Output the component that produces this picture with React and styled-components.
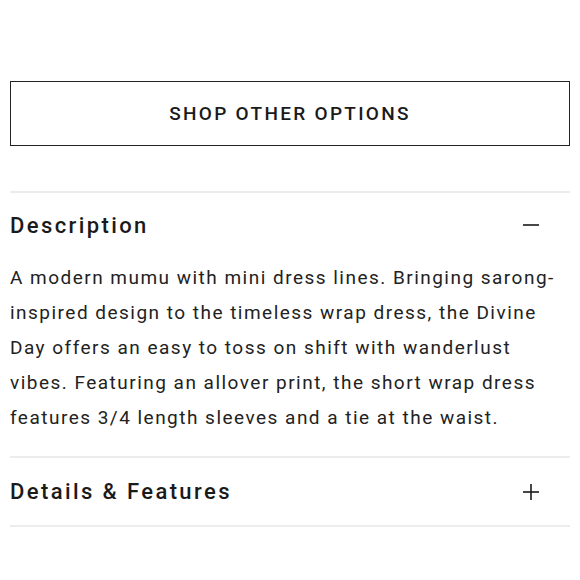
import styled, { createGlobalStyle } from 'styled-components';

const GlobalStyle = createGlobalStyle`
  body {
    margin: 0;
    background: #fff;
    font-family: Roboto, "Liberation Sans", sans-serif;
    color: #1a1a1a;
  }
`;

const Page = styled.div`
  padding: 81px 10px 0;
`;

const ShopButton = styled.button`
  display: block;
  width: 100%;
  height: 65px;
  background: #fff;
  border: 1.5px solid #222;
  font-family: Roboto, "Liberation Sans", sans-serif;
  font-size: 19px;
  font-weight: 500;
  letter-spacing: 2.3px;
  color: #1a1a1a;
  cursor: pointer;
`;

const Accordion = styled.div`
  margin-top: 45px;
  border-top: 2px solid #ececec;
`;

const Section = styled.div`
  border-bottom: 2px solid #ececec;
`;

const Header = styled.div`
  display: flex;
  align-items: center;
  justify-content: space-between;
  height: ${(p) => p.$height}px;
`;

const Title = styled.h2`
  margin: 0;
  font-size: 22px;
  font-weight: 500;
  letter-spacing: 2.4px;
`;

const Toggle = styled.svg`
  width: 18px;
  height: 18px;
  margin-right: 30px;
  stroke: #1a1a1a;
  stroke-width: 1.6;
`;

const Body = styled.p`
  margin: 0;
  padding: 3px 0 21px;
  font-size: 19px;
  line-height: 35px;
  letter-spacing: 1.48px;
  color: #222;
`;

function Icon({ open }) {
  return (
    <Toggle viewBox="0 0 18 18">
      <line x1="1" y1="9" x2="17" y2="9" />
      {!open && <line x1="9" y1="1" x2="9" y2="17" />}
    </Toggle>
  );
}

export default function App() {
  return (
    <>
      <GlobalStyle />
      <Page>
        <ShopButton>SHOP OTHER OPTIONS</ShopButton>
        <Accordion>
          <Section>
            <Header $height={64}>
              <Title>Description</Title>
              <Icon open />
            </Header>
            <Body>
              A modern mumu with mini dress lines. Bringing sarong-inspired design to the timeless wrap
              dress, the Divine Day offers an easy to toss on shift with wanderlust vibes. Featuring an
              allover print, the short wrap dress features 3/4 length sleeves and a tie at the waist.
            </Body>
          </Section>
          <Section>
            <Header $height={67}>
              <Title>Details &amp; Features</Title>
              <Icon />
            </Header>
          </Section>
        </Accordion>
      </Page>
    </>
  );
}
